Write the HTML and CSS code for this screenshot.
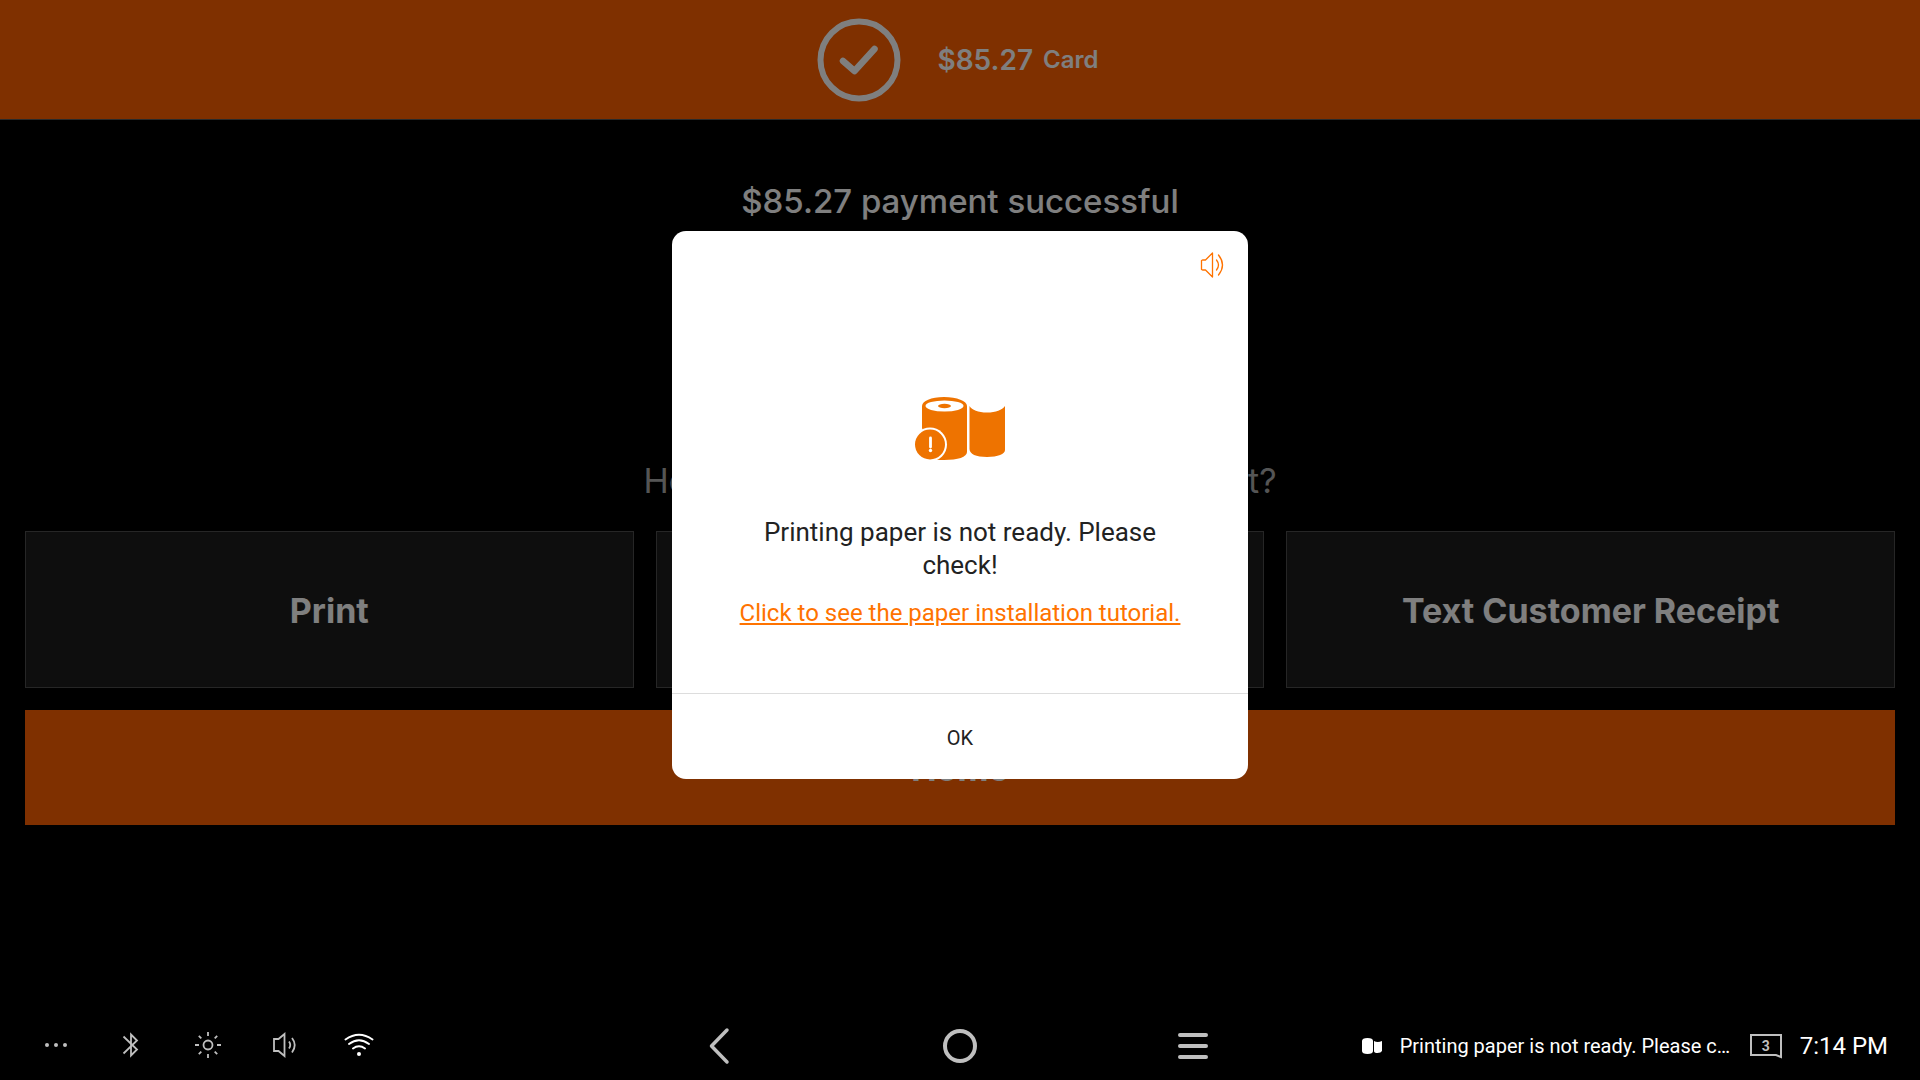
FILE: index.html
```html
<!DOCTYPE html>
<html lang="en">
<head>
<meta charset="utf-8">
<meta name="viewport" content="width=device-width, initial-scale=1">
<title>Payment successful</title>
<link rel="stylesheet" href="styles.css">
</head>
<body>
<div class="screen">
  <div class="app">
    <header class="tender-bar">
      <svg class="tender-check" viewBox="0 0 84 84" aria-hidden="true">
        <circle cx="42" cy="42" r="38.5" fill="none" stroke="currentColor" stroke-width="6"/>
        <path d="M26 43 37.500 53 57.500 31" fill="none" stroke="currentColor" stroke-width="6.500" stroke-linecap="round" stroke-linejoin="round"/>
      </svg>
      <p class="tender"><span class="tender-amount">$85.27</span><span class="tender-type">Card</span></p>
    </header>
    <main class="receipt">
      <h1 class="receipt-title">$85.27 payment successful</h1>
      <p class="receipt-question">How would you like to get your receipt?</p>
      <div class="receipt-options">
        <button class="option" type="button">Print</button>
        <button class="option" type="button">Email</button>
        <button class="option" type="button">Text Customer Receipt</button>
      </div>
      <button class="home" type="button">Home</button>
    </main>
    <div class="overlay">
      <section class="dialog" role="alertdialog" aria-modal="true" aria-labelledby="dialog-message">
        <div class="dialog-top">
          <button class="sound" type="button" aria-label="Sound">
            <svg viewBox="0 0 28 28" aria-hidden="true" fill="none" stroke="currentColor" stroke-width="1.3" stroke-linejoin="round" stroke-linecap="round">
              <path d="M1.500 9.500 2.500 9H5.500L12.500 2V26L5.500 19H2.500L1.500 18.500Z"/>
              <path d="M16.500 9Q20.500 14 16.500 19M18.500 4Q26.500 14 18.500 24"/>
            </svg>
          </button>
        </div>
        <svg class="roll" viewBox="0 0 92 66" aria-hidden="true">
          <path fill="#ee7300" d="M8 10C8 5 17 1 30 1S53 5 53 10V56C53 61 44 64 30 64H20L8 32Z"/>
          <ellipse cx="30.500" cy="10" rx="19" ry="5.500" fill="#fff"/>
          <ellipse cx="30.500" cy="10" rx="6.500" ry="2.200" fill="#ee7300"/>
          <path fill="#ee7300" d="M55.500 10C58 14 64 16.500 73 16.500S88 14 91 10V54C91 58 84 61 73 61S55.500 58 55.500 53Z"/>
          <circle cx="16" cy="48.500" r="17" fill="#fff"/>
          <circle cx="16" cy="48.500" r="15" fill="#ee7300"/>
          <path d="M16.500 42V51" stroke="#fff" stroke-width="2.800" stroke-linecap="round"/>
          <circle cx="16.500" cy="54.500" r="1.700" fill="#fff"/>
        </svg>
        <p class="dialog-message" id="dialog-message">Printing paper is not ready. Please check!</p>
        <a class="dialog-link" href="#tutorial">Click to see the paper installation tutorial.</a>
        <button class="dialog-ok" type="button">OK</button>
      </section>
    </div>
  </div>

  <nav class="system-bar">
    <div class="quick">
      <button type="button" aria-label="More"><svg viewBox="0 0 32 32" fill="currentColor"><circle cx="7" cy="16" r="2"/><circle cx="16" cy="16" r="2"/><circle cx="25" cy="16" r="2"/></svg></button>
      <button type="button" aria-label="Bluetooth"><svg viewBox="0 0 32 32" fill="none" stroke="currentColor" stroke-width="1.8"><path d="M7.500 7.500 21 20.500 15 26.500V5.500L21 11.500 7.500 24.500"/></svg></button>
      <button type="button" aria-label="Brightness"><svg viewBox="0 0 32 32" fill="none" stroke="currentColor" stroke-width="1.8"><circle cx="16" cy="16" r="4.500"/><path d="M16 3V7M16 25V29M3 16H7M25 16H29M6.800 6.800 9.300 9.300M22.700 22.700 25.200 25.200M6.800 25.200 9.300 22.700M22.700 9.300 25.200 6.800"/></svg></button>
      <button type="button" aria-label="Volume"><svg viewBox="0 0 32 32" fill="none" stroke="currentColor" stroke-width="1.8"><path d="M6 10H10.500L16.500 5V27L10.500 22H6Z"/><path d="M21 12.500Q23.500 16 21 19.500M24 9Q29.500 16 24 23.500"/></svg></button>
      <button class="wifi" type="button" aria-label="Wi-Fi"><svg viewBox="0 0 32 32" fill="none" stroke="currentColor" stroke-width="1.900" stroke-linecap="round"><path d="M1.500 10.500Q15 1 28.500 10.500M5 15Q15 7.500 25 15M9 19.500Q15 15 21 19.500"/><circle cx="15" cy="25" r="2" fill="currentColor" stroke="none"/></svg></button>
    </div>
    <div class="keys">
      <button type="button" aria-label="Back"><svg viewBox="0 0 40 40" fill="none" stroke="currentColor" stroke-width="3.500" stroke-linecap="round" stroke-linejoin="round"><path d="M24 5 8.500 21 24 37"/></svg></button>
      <button type="button" aria-label="Home screen"><svg viewBox="0 0 40 40" fill="none" stroke="currentColor" stroke-width="4"><circle cx="20" cy="21" r="15"/></svg></button>
      <button type="button" aria-label="Recent apps"><svg viewBox="0 0 40 40" fill="none" stroke="currentColor" stroke-width="4" stroke-linecap="round"><path d="M3 10H29M3 21H29M3 32H29"/></svg></button>
    </div>
    <div class="status">
      <svg class="status-roll" viewBox="0 0 20 16" aria-hidden="true" fill="#fff"><path d="M0 3Q0 0 5.500 0T11 3V13Q11 16 5.500 16T0 13Z"/><path d="M12 3Q15.500 5 20 3V13Q19 15 15.500 15T12 13Z"/></svg>
      <span class="status-text">Printing paper is not ready. Please check!</span>
      <span class="badge"><svg viewBox="0 0 32 26" aria-hidden="true" fill="none" stroke="currentColor" stroke-width="2"><path d="M1 2H31V24L26 22H1Z"/></svg><span class="badge-count">3</span></span>
      <time class="clock">7:14 PM</time>
    </div>
  </nav>
</div>
</body>
</html>
```
FILE: styles.css
```css
*,
*::before,
*::after {
  box-sizing: border-box;
}

body {
  margin: 0;
  background: #000;
  color: #fff;
  font-family: Inter, "Liberation Sans", sans-serif;
}

h1,
p {
  margin: 0;
}

button {
  padding: 0;
  border: 0;
  background: none;
  color: inherit;
  font: inherit;
  cursor: pointer;
}

svg {
  display: block;
}

.screen {
  display: flex;
  flex-direction: column;
  min-height: 100vh;
}

.app {
  position: relative;
  flex: 1;
}

/* Tender summary */
.tender-bar {
  display: flex;
  align-items: center;
  justify-content: center;
  gap: 36px;
  height: 120px;
  padding-right: 4px;
  border-bottom: 1px solid #555;
  background: #ff6000;
}

.tender-check {
  width: 84px;
  height: 84px;
}

.tender {
  display: flex;
  align-items: center;
  gap: 10px;
  font-weight: 600;
}

.tender-amount {
  font-size: 28px;
}

.tender-type {
  font-size: 24px;
}

/* Receipt choice */
.receipt {
  display: flex;
  flex-direction: column;
  padding: 60px 25px 24px;
}

.receipt-title,
.receipt-question {
  font-size: 34px;
  line-height: 42px;
  text-align: center;
}

.receipt-title {
  font-size: 33px;
  font-weight: 500;
}

.receipt-question {
  margin-top: 238px;
  color: #aaa;
  font-weight: 400;
}

.receipt-options {
  display: grid;
  grid-template-columns: repeat(3, 1fr);
  gap: 22px;
  margin-top: 29px;
}

.option {
  height: 157px;
  padding-top: 2px;
  border: 1px solid #4c4c4c;
  background: #1d1d1d;
  font-size: 34px;
  font-weight: 700;
}

.home {
  height: 115px;
  margin-top: 22px;
  padding-top: 2px;
  background: #ff6000;
  font-size: 34px;
  font-weight: 700;
}

/* Paper alert */
.overlay {
  position: absolute;
  inset: 0;
  display: flex;
  align-items: center;
  justify-content: center;
  background: rgba(0, 0, 0, 0.5);
}

.dialog {
  display: flex;
  flex-direction: column;
  align-items: center;
  width: 576px;
  max-width: 100%;
  overflow: hidden;
  border-radius: 14px;
  background: #fff;
  color: #222;
  font-family: Roboto, "Liberation Sans", sans-serif;
}

.dialog-top {
  display: flex;
  justify-content: flex-end;
  align-self: stretch;
  padding: 20px 20px 0;
  color: #ff7300;
}

.sound svg {
  width: 28px;
  height: 28px;
}

.roll {
  width: 92px;
  height: 66px;
  margin-top: 117px;
}

.dialog-message {
  max-width: 440px;
  margin-top: 54px;
  font-size: 26px;
  line-height: 33px;
  text-align: center;
}

.dialog-link {
  margin-top: 16px;
  color: #ff7300;
  font-size: 24px;
  line-height: 30px;
}

.dialog-ok {
  align-self: stretch;
  height: 86px;
  margin-top: 65px;
  padding-top: 2px;
  border-top: 1px solid #ddd;
  font-size: 20px;
}

/* System bar */
.system-bar {
  display: grid;
  grid-template-columns: 1fr auto 1fr;
  align-items: center;
  height: 70px;
  color: #bfbfbf;
  font-family: Roboto, "Liberation Sans", sans-serif;
}

.quick,
.keys,
.status {
  display: flex;
  align-items: center;
}

.quick {
  padding-left: 18px;
}

.quick button {
  display: flex;
  justify-content: center;
  width: 76px;
}

.quick svg {
  width: 32px;
  height: 32px;
}

.quick .wifi {
  color: #fff;
}

.keys {
  gap: 197px;
}

.keys svg {
  width: 40px;
  height: 40px;
}

.status {
  justify-content: flex-end;
  gap: 18px;
  min-width: 0;
  padding-top: 2px;
  padding-right: 32px;
}

.status-roll {
  flex: none;
  width: 20px;
  height: 16px;
}

.status-text {
  max-width: 332px;
  overflow: hidden;
  color: #fff;
  font-size: 20px;
  text-overflow: ellipsis;
  white-space: nowrap;
}

.badge {
  display: grid;
  flex: none;
  place-items: center;
  width: 32px;
}

.badge > * {
  grid-area: 1 / 1;
}

.badge-count {
  font-size: 14px;
  font-weight: 700;
}

.clock {
  flex: none;
  color: #fff;
  font-size: 24px;
}
```
